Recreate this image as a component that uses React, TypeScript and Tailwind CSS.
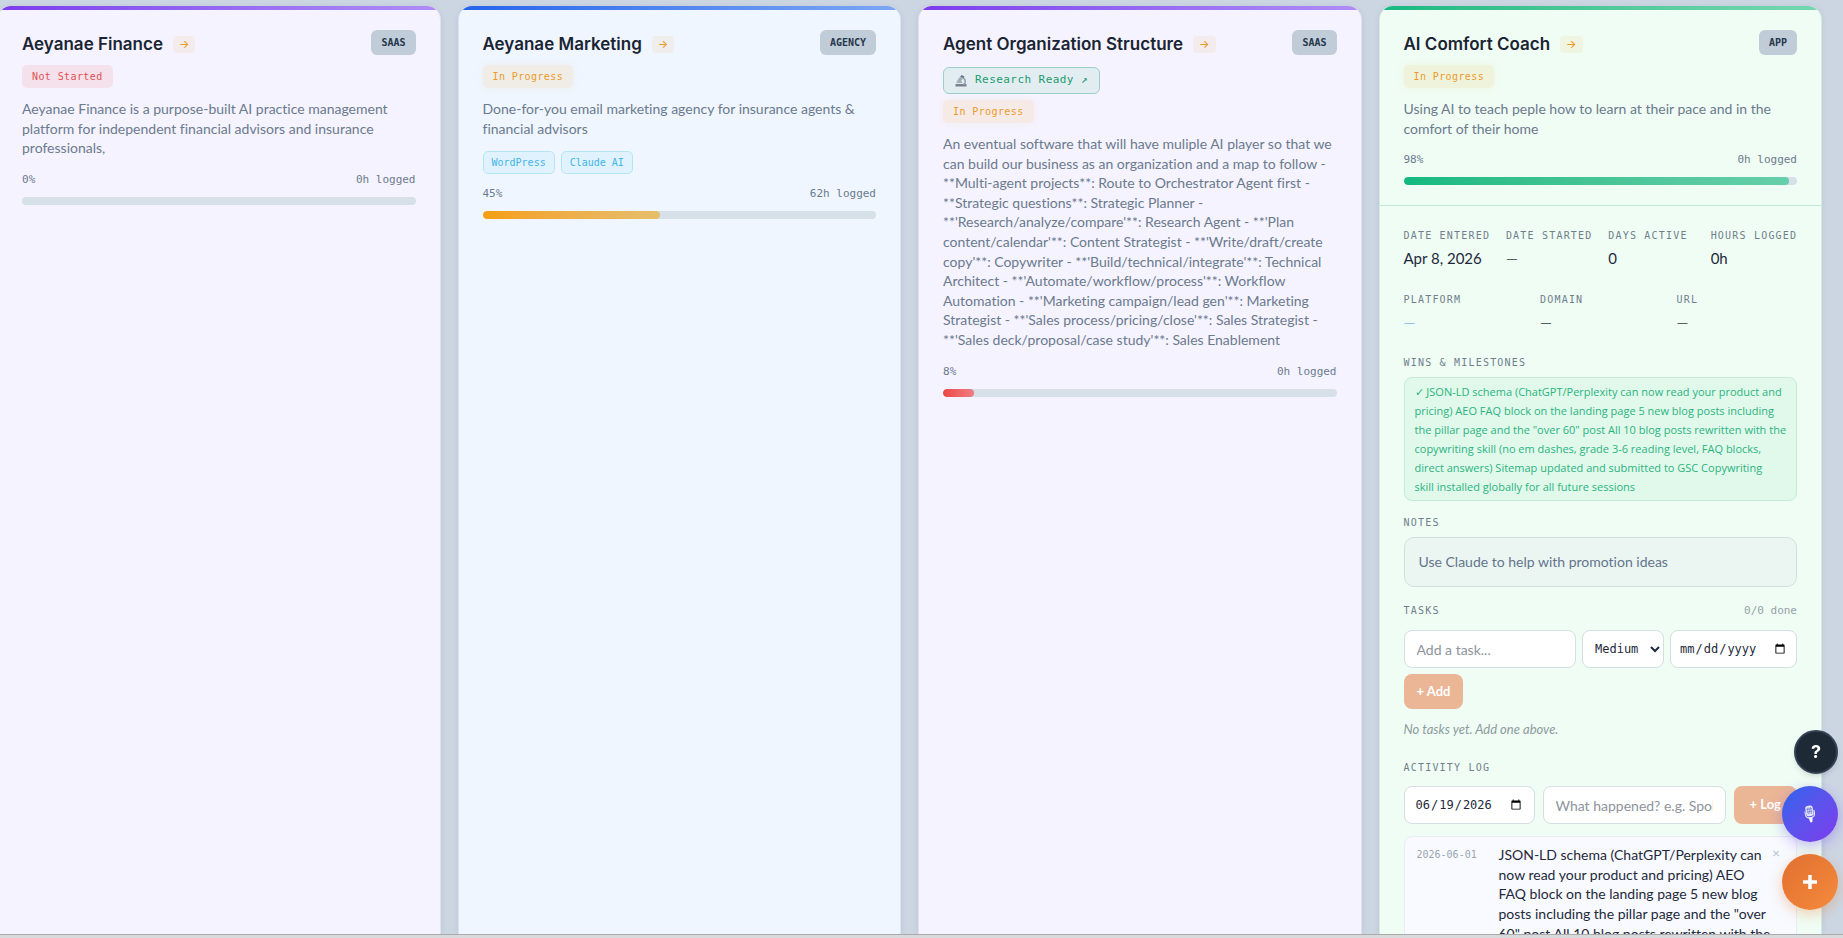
import type { ReactNode } from "react";
import { Plus } from "lucide-react";

const mono = "font-['DejaVu_Sans_Mono','Liberation_Mono',monospace]";

type Project = {
  name: string;
  kind: string;
  status: string;
  statusClass: string;
  cardClass: string;
  accentClass: string;
  description: string;
  tags?: string[];
  research?: boolean;
  percent: number;
  hours: number;
  barClass: string;
};

const inProgress = "bg-[#f59e0b]/10 text-[#eb9a2d] shadow-[0_0_8px_rgba(245,158,11,0.08)]";

const projects: Project[] = [
  {
    name: "Aeyanae Finance",
    kind: "SAAS",
    status: "Not Started",
    statusClass: "bg-[#ef4444]/10 text-[#e05252]",
    cardClass: "bg-[#f5f3ff] border-[#e3dff5]",
    accentClass: "from-[#7c3aed] to-[#b18cf5]",
    description:
      "Aeyanae Finance is a purpose-built AI practice management\nplatform for independent financial advisors and insurance\nprofessionals,",
    percent: 0,
    hours: 0,
    barClass: "from-[#ef4444] to-[#ef8080]",
  },
  {
    name: "Aeyanae Marketing",
    kind: "AGENCY",
    status: "In Progress",
    statusClass: inProgress,
    cardClass: "bg-[#eff6ff] border-[#d8e4f8]",
    accentClass: "from-[#2563eb] to-[#7da7f3]",
    description:
      "Done-for-you email marketing agency for insurance agents &\nfinancial advisors",
    tags: ["WordPress", "Claude AI"],
    percent: 45,
    hours: 62,
    barClass: "from-[#f59e0b] to-[#e6be6c]",
  },
  {
    name: "Agent Organization Structure",
    kind: "SAAS",
    status: "In Progress",
    statusClass: inProgress,
    cardClass: "bg-[#f5f3ff] border-[#e3dff5]",
    accentClass: "from-[#7c3aed] to-[#b18cf5]",
    description:
      "An eventual software that will have muliple AI player so that we\ncan build our business as an organization and a map to follow -\n**Multi-agent projects**: Route to Orchestrator Agent first -\n**Strategic questions**: Strategic Planner -\n**'Research/analyze/compare'**: Research Agent - **'Plan\ncontent/calendar'**: Content Strategist - **'Write/draft/create\ncopy'**: Copywriter - **'Build/technical/integrate'**: Technical\nArchitect - **'Automate/workflow/process'**: Workflow\nAutomation - **'Marketing campaign/lead gen'**: Marketing\nStrategist - **'Sales process/pricing/close'**: Sales Strategist -\n**'Sales deck/proposal/case study'**: Sales Enablement",
    research: true,
    percent: 8,
    hours: 0,
    barClass: "from-[#ef4444] to-[#ee7d84]",
  },
  {
    name: "AI Comfort Coach",
    kind: "APP",
    status: "In Progress",
    statusClass: inProgress,
    cardClass: "bg-[#f0fdf4] border-[#cfeedd]",
    accentClass: "from-[#10b981] to-[#74d8b0]",
    description:
      "Using AI to teach peple how to learn at their pace and in the\ncomfort of their home",
    percent: 98,
    hours: 0,
    barClass: "from-[#10b981] to-[#66cfab]",
  },
];

function Microscope() {
  return (
    <svg viewBox="0 0 24 24" className="h-3 w-3" aria-hidden="true">
      <path d="M1 18h22v5H1z" fill="#7a8290" />
      <path d="M14 5c9 3 8 12 2 14" fill="none" stroke="#9aa3ad" strokeWidth="3" />
      <path d="M3 13h11v2.500H3z" fill="#8d96a1" />
      <path d="M11 2l6 3-7 10-6-3z" fill="#a4adb8" />
      <path d="M13 0l6 3-2 3-6-3z" fill="#68717e" />
    </svg>
  );
}

function StudioMic() {
  return (
    <svg viewBox="0 0 24 24" className="h-5 w-5" aria-hidden="true">
      <g transform="rotate(-10 12 12)">
        <rect x="7.500" y="2" width="9" height="12.500" rx="3" fill="#e4e6f5" />
        <path d="M10 4v8M12 4v8M14 4v8M8.500 6h7M8.500 9h7" stroke="#6d76d4" strokeWidth="0.8" />
        <path d="M6.500 8v4c0 6 11 6 11 0V8" fill="none" stroke="#dfe1f5" strokeWidth="1.300" />
        <path d="M9.500 16h5l-1.300 6h-2.400z" fill="#f4f4fc" />
      </g>
    </svg>
  );
}

function Label({ children }: { children: ReactNode }) {
  return (
    <div className={`${mono} text-[10px] leading-4 tracking-[0.12em] whitespace-nowrap text-[#6f7f8c] uppercase`}>
      {children}
    </div>
  );
}

function Field({ label, value, valueClass }: { label: string; value: string; valueClass: string }) {
  return (
    <div>
      <Label>{label}</Label>
      <div className={`mt-[3px] text-[15px] leading-[22px] ${valueClass}`}>{value}</div>
    </div>
  );
}

const control =
  "h-[38px] min-w-0 rounded-lg border border-[#d3dfe2] bg-white text-[#1e293b] outline-none placeholder:text-[#8d949c]";
const orangeButton = "rounded-lg bg-[#eab696] text-[13px] font-bold whitespace-nowrap text-white";

function Details() {
  return (
    <div className="border-t border-[#c5e8d6] px-6 pt-[22px]">
      <div className="grid grid-cols-4 gap-4">
        <Field label="Date Entered" value="Apr 8, 2026" valueClass="text-[#1e293b]" />
        <Field label="Date Started" value="—" valueClass="text-[#52635f]" />
        <Field label="Days Active" value="0" valueClass="text-[#1e293b]" />
        <Field label="Hours Logged" value="0h" valueClass="text-[#1e293b]" />
      </div>
      <div className="mt-[23px] grid grid-cols-3 gap-4">
        <Field label="Platform" value="—" valueClass="text-[#8cc3ef]" />
        <Field label="Domain" value="—" valueClass="text-[#52635f]" />
        <Field label="URL" value="—" valueClass="text-[#52635f]" />
      </div>

      <div className="mt-[22px]">
        <Label>Wins &amp; Milestones</Label>
        <p className="mt-1.5 rounded-lg border border-[#c4ebd8] bg-[#e1f9eb] px-2.5 py-1 font-['Open_Sans'] text-[11px] leading-[19px] whitespace-pre text-[#2bb380]">
          {"✓ JSON-LD schema (ChatGPT/Perplexity can now read your product and\npricing) AEO FAQ block on the landing page 5 new blog posts including\nthe pillar page and the \"over 60\" post All 10 blog posts rewritten with the\ncopywriting skill (no em dashes, grade 3-6 reading level, FAQ blocks,\ndirect answers) Sitemap updated and submitted to GSC Copywriting\nskill installed globally for all future sessions"}
        </p>
      </div>

      <div className="mt-[14px]">
        <Label>Notes</Label>
        <p className="mt-1.5 rounded-[10px] border border-[#d0e0de] bg-[#ebf6f3] px-[14px] py-[14px] text-sm text-[#64748b]">
          Use Claude to help with promotion ideas
        </p>
      </div>

      <div className="mt-4">
        <div className="flex items-center justify-between">
          <Label>Tasks</Label>
          <span className={`${mono} text-[11px] leading-4 text-[#93a1a8]`}>0/0 done</span>
        </div>
        <form className="mt-[11px] flex flex-wrap gap-1.5" onSubmit={(e) => e.preventDefault()}>
          <input aria-label="Task" placeholder="Add a task..." className={`${control} w-[120px] grow px-3 text-sm`} />
          <select aria-label="Priority" defaultValue="Medium" className={`${control} ${mono} w-[82px] px-2 text-xs`}>
            <option>Low</option>
            <option>Medium</option>
            <option>High</option>
          </select>
          <input aria-label="Due date" type="date" className={`${control} ${mono} w-[127px] px-2 text-xs`} />
          <button type="submit" className={`${orangeButton} h-[35px] px-[13px]`}>+ Add</button>
        </form>
        <p className="mt-2.5 text-[13px] leading-5 text-[#8c9b9e] italic">No tasks yet. Add one above.</p>
      </div>

      <div className="mt-[21px]">
        <Label>Activity Log</Label>
        <form className="mt-2.5 flex gap-2" onSubmit={(e) => e.preventDefault()}>
          <input aria-label="Log date" type="date" defaultValue="2026-06-19" className={`${control} ${mono} w-[131px] px-2.5 text-xs`} />
          <input aria-label="Log entry" placeholder="What happened? e.g. Spoke with" className={`${control} flex-1 px-3 text-sm`} />
          <button type="submit" className={`${orangeButton} h-[38px] px-4`}>+ Log</button>
        </form>
        <div className="mt-3 flex items-start rounded-lg border border-[#e6edf5] bg-[#f8faff] px-3 py-2">
          <time className={`${mono} w-[82px] shrink-0 text-[10px] leading-5 text-[#9aa5b1]`}>2026-06-01</time>
          <p className="min-w-0 flex-1 text-sm leading-[1.4] whitespace-pre text-[#1e293b]">
            {"JSON-LD schema (ChatGPT/Perplexity can\nnow read your product and pricing) AEO\nFAQ block on the landing page 5 new blog\nposts including the pillar page and the \"over\n60\" post All 10 blog posts rewritten with the\ncopywriting skill (no em dashes, grade 3-6"}
          </p>
          <button type="button" aria-label="Delete entry" className="w-4 text-sm leading-4 text-[#b6c0cb]">×</button>
        </div>
      </div>
    </div>
  );
}

function Card({ project, children }: { project: Project; children?: ReactNode }) {
  return (
    <article className={`min-w-0 overflow-hidden rounded-t-[14px] border-x shadow-[0_1px_6px_rgba(15,23,42,0.08)] ${project.cardClass}`}>
      <div className={`h-1 bg-linear-to-r ${project.accentClass}`} />
      <div className="px-6 pt-5 pb-5">
        <header className="flex items-start justify-between">
          <div>
            <h2 className="flex items-center gap-2.5 pt-[3px] font-['Inter'] text-[17px] leading-[22px] font-semibold whitespace-nowrap text-[#1a2433]">
              {project.name}
              <a href="#open" aria-label={`Open ${project.name}`} className="rounded-sm bg-[#f59e0b]/8 px-1.5 text-[11px] leading-[17px] font-medium text-[#e89b1c]">
                →
              </a>
            </h2>
            {project.research && (
              <a href="#research" className={`${mono} mt-3 -mb-1 flex h-[27px] w-fit items-center gap-2 rounded-md border border-[#9ccfca] bg-[#e2edf2] px-[11px] text-[11px] font-medium tracking-[0.04em] text-[#1d9b6c]`}>
                <Microscope />
                <span>Research Ready ↗</span>
              </a>
            )}
            <div className={`${mono} mt-2.5 h-[23px] w-fit rounded-[5px] px-2.5 text-[10px] leading-[23px] font-medium tracking-[0.04em] ${project.statusClass}`}>
              {project.status}
            </div>
          </div>
          <span className={`${mono} rounded-md bg-[#c1ccd9] px-2.5 text-[10px] leading-[25px] font-bold text-[#26364b]`}>{project.kind}</span>
        </header>
        <p className="mt-[11px] text-sm leading-[1.4] whitespace-pre text-[#6b7a8d]">{project.description}</p>
        {project.tags && (
          <ul className="mt-[13px] -mb-0.5 flex gap-1.5">
            {project.tags.map((tag) => (
              <li key={tag} className={`${mono} rounded-[5px] border border-[#b4e6f2] bg-[#e0f2fe] px-2 text-[10px] leading-[21px] text-[#42b5e8]`}>{tag}</li>
            ))}
          </ul>
        )}
        <div className={`${mono} mt-3.5 flex justify-between text-[11px] leading-[15px] text-[#6b7a8d]`}>
          <span>{project.percent}%</span>
          <span>{project.hours}h logged</span>
        </div>
        <div className="mt-2.5 h-2 overflow-hidden rounded bg-[#d5e0e9]">
          <div className={`h-full rounded bg-linear-to-r ${project.barClass}`} style={{ width: `${project.percent}%` }} />
        </div>
      </div>
      {children}
    </article>
  );
}

export default function App() {
  return (
    <div className="flex h-screen flex-col overflow-hidden bg-[#ccd6e3] font-['Lato','Liberation_Sans',sans-serif] [font-variant-ligatures:none]">
      <main className="-ml-[3px] grid min-h-0 flex-1 grid-cols-4 grid-rows-[100%] gap-[17px] overflow-hidden pt-1.5 pr-[21px]">
        {projects.map((project) => (
          <Card key={project.name} project={project}>
            {project.kind === "APP" && <Details />}
          </Card>
        ))}
      </main>
      <div className="h-1 shrink-0 border-t border-[#a9abad] bg-[#d9dadb]" />
      <div className="fixed right-[5px] bottom-7 flex flex-col items-end gap-3">
        <button type="button" aria-label="Help" className="h-11 w-11 rounded-full border-2 border-[#334155] bg-[#1e2936] font-['Inter'] text-lg font-bold text-white shadow-md">?</button>
        <button type="button" aria-label="Record" className="flex h-14 w-14 items-center justify-center rounded-full bg-linear-to-br from-[#2563eb] to-[#7c3aed] shadow-[0_4px_14px_rgba(109,60,237,0.35)]">
          <StudioMic />
        </button>
        <button type="button" aria-label="Add project" className="flex h-14 w-14 items-center justify-center rounded-full bg-linear-to-br from-[#e07030] to-[#f58a3c] text-white shadow-[0_4px_14px_rgba(232,120,50,0.35)]">
          <Plus className="h-6 w-6" strokeWidth={3.5} strokeLinecap="butt" />
        </button>
      </div>
    </div>
  );
}
